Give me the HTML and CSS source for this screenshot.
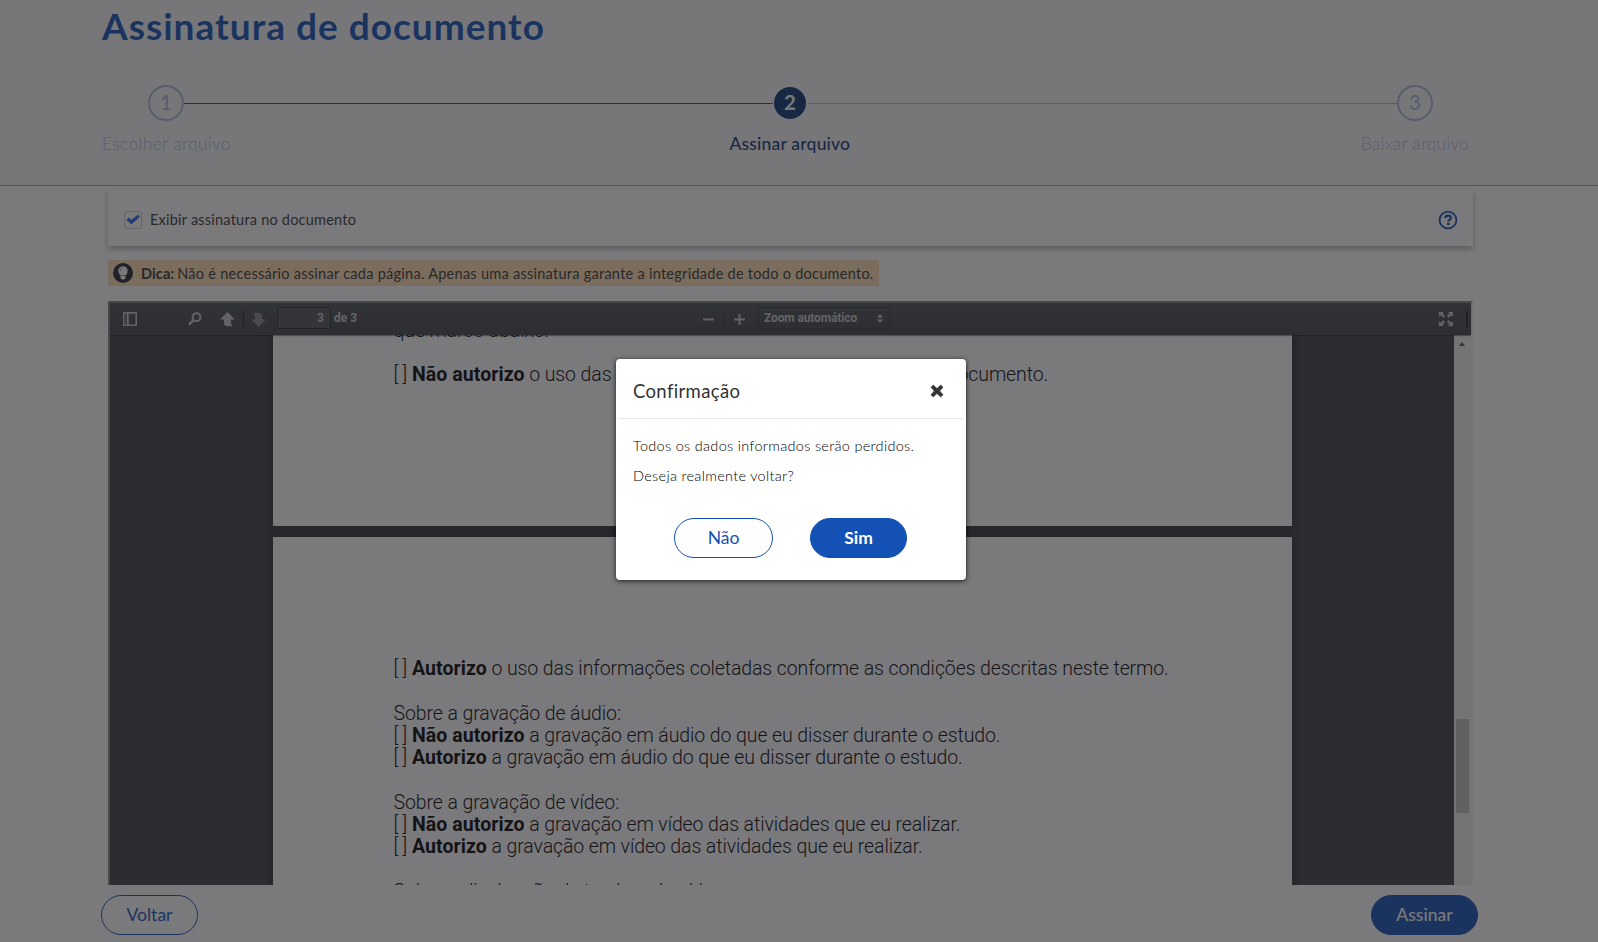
FILE: index.html
```html
<!DOCTYPE html>
<html lang="pt-BR">
<head>
<meta charset="utf-8">
<title>Assinatura de documento</title>
<link rel="stylesheet" href="styles.css">
</head>
<body>
<header class="header">
  <h1 class="title">Assinatura de documento</h1>
  <div class="track">
    <span class="circle">1</span><span class="line line-done"></span>
    <span class="circle circle-active">2</span><span class="line"></span>
    <span class="circle">3</span>
  </div>
  <div class="labels">
    <span class="label label-first">Escolher arquivo</span>
    <span class="label label-active">Assinar arquivo</span>
    <span class="label label-last">Baixar arquivo</span>
  </div>
</header>

<main class="main">
  <section class="card">
    <span class="checkbox"><svg width="14" height="11" viewBox="0 0 14 11"><path d="M.5 5.800 2.700 3.600l2.500 2.200L12.200.5 13.700 3 5.300 10.400z" fill="#2468dc"/></svg></span>
    <span class="card-text">Exibir assinatura no documento</span>
    <svg class="help" width="20" height="20" viewBox="0 0 20 20" fill="none" stroke="#1351b4"><circle cx="10" cy="10" r="8.400" stroke-width="1.800"/><path d="M7.200 8C7.400 6.400 8.600 5.600 10.100 5.600c1.600 0 2.800.900 2.800 2.200 0 1.900-2.500 1.800-2.500 3.600" stroke-width="2.400"/><path d="M9 12.700h2.700v2.400H9z" fill="#1351b4" stroke="none"/></svg>
  </section>

  <p class="tip">
    <svg class="bulb" width="20" height="20" viewBox="0 0 20 20"><circle cx="10" cy="10" r="10" fill="#212328"/><path d="M10 3.200a4.700 4.700 0 0 0-4.700 4.700c0 2 1.400 2.900 2 4.600h5.400c.6-1.700 2-2.600 2-4.600A4.700 4.700 0 0 0 10 3.200zM7.500 13.100h5v1.800l-1.300 1.700H8.800l-1.300-1.700z" fill="#fff"/><path d="M7.300 7.900A2.700 2.700 0 0 1 10 5.200" fill="none" stroke="#777" stroke-width=".7"/></svg>
    <strong class="tip-strong">Dica:</strong><span class="tip-text">Não é necessário assinar cada página. Apenas uma assinatura garante a integridade de todo o documento.</span>
  </p>

  <section class="viewer">
    <div class="toolbar">
      <svg class="ic-side" width="14" height="14" viewBox="0 0 14 14"><path d="M0 0h14v14H0zM1.500 1.700v10.800H4V1.700zM5.700 1.700v10.800h6.800V1.700z" fill="#c6c6c6" fill-rule="evenodd"/><path d="M1.500 1.700H4v10.800H1.500z" fill="#707070"/></svg>
      <svg class="ic-find" width="14" height="14" viewBox="0 0 14 14" fill="none" stroke="#c6c6c6"><circle cx="8.500" cy="5.200" r="3.900" stroke-width="2"/><path d="M5.500 8.200.8 12.900" stroke-width="2.400"/></svg>
      <svg class="ic-up" width="15" height="15" viewBox="0 0 15 15"><path d="M7.500 0 15 7.500h-4v3.300c0 1.600.8 2.600 2 3.400H7.500C5 14.200 4 12.600 4 10.500v-3H0z" fill="#c6c6c6"/></svg>
      <span class="split"></span>
      <svg class="ic-down" width="15" height="15" viewBox="0 0 15 15"><path d="M7.500 15 0 7.500h4V4.200C4 2.600 3.200 1.600 2 .8h5.500C10 .8 11 2.400 11 4.500v3h4z" fill="#8a8b8d"/></svg>
      <span class="page-input">3</span>
      <span class="page-total">de 3</span>
      <svg class="ic-minus" width="11" height="11" viewBox="0 0 11 11"><path d="M0 4.500h11v2H0z" fill="#c6c6c6"/></svg>
      <span class="split split-zoom"></span>
      <svg class="ic-plus" width="11" height="11" viewBox="0 0 11 11"><path d="M0 4.500h11v2H0zM4.500 0h2v11h-2z" fill="#c6c6c6"/></svg>
      <span class="zoom-select"><span>Zoom automático</span><svg width="6" height="9" viewBox="0 0 6 9"><path d="M3 0l3 3.500H0zM0 5.500h6L3 9z" fill="#c6c6c6"/></svg></span>
      <svg class="ic-full" width="14" height="14" viewBox="0 0 14 14" fill="#c6c6c6"><path d="M0 0h5L3.600 1.500 6 4 4.300 5.800 1.700 3.300 0 5zM14 0v5l-1.700-1.700-2.600 2.500L8 4l2.400-2.500L9 0zM0 14V9l1.700 1.700 2.600-2.500L6 10l-2.400 2.500L5 14zM14 14H9l1.400-1.500L8 10l1.700-1.800 2.600 2.500L14 9z"/></svg>
      <span class="split split-end"></span>
    </div>
    <div class="pages">
      <div class="sheets">
        <article class="page page-one">
          <p>que marco abaixo:</p>
          <p>&nbsp;</p>
          <p><span class="box">[ ]</span><b>Não autorizo</b> o uso das informações<span class="wide"> coletadas por meio deste </span>documento.</p>
        </article>
        <article class="page page-two">
          <p><span class="box">[ ]</span><b>Autorizo</b> o uso das informações coletadas conforme as condições descritas neste termo.</p>
          <p>&nbsp;</p>
          <p>Sobre a gravação de áudio:</p>
          <p><span class="box">[ ]</span><b>Não autorizo</b> a gravação em áudio do que eu disser durante o estudo.</p>
          <p><span class="box">[ ]</span><b>Autorizo</b> a gravação em áudio do que eu disser durante o estudo.</p>
          <p>&nbsp;</p>
          <p>Sobre a gravação de vídeo:</p>
          <p><span class="box">[ ]</span><b>Não autorizo</b> a gravação em vídeo das atividades que eu realizar.</p>
          <p><span class="box">[ ]</span><b>Autorizo</b> a gravação em vídeo das atividades que eu realizar.</p>
          <p>&nbsp;</p>
          <p>Sobre a divulgação de trechos do vídeo:</p>
        </article>
      </div>
      <div class="scrollbar"><span class="arrow"></span><span class="thumb"></span></div>
    </div>
  </section>
</main>

<footer class="footer">
  <button class="btn btn-back">Voltar</button>
  <button class="btn btn-primary btn-sign">Assinar</button>
</footer>

<div class="overlay"></div>
<div class="modal" role="dialog">
  <div class="modal-head">
    <h2 class="modal-title">Confirmação</h2>
    <svg width="14" height="14" viewBox="0 0 14 14"><path d="M3.300 1.200 7 4.700l3.700-3.500 2.200 2.100L9.500 7l3.400 3.700-2.200 2.100L7 9.300l-3.700 3.500-2.200-2.100L4.500 7 1.100 3.300z" fill="#333" stroke="#333" stroke-linejoin="round"/></svg>
  </div>
  <div class="modal-body">
    <p>Todos os dados informados serão perdidos.</p>
    <p>Deseja realmente voltar?</p>
  </div>
  <div class="modal-actions">
    <button class="btn btn-no">Não</button>
    <button class="btn btn-primary btn-yes">Sim</button>
  </div>
</div>
</body>
</html>
```
FILE: styles.css
```css
* { box-sizing: border-box; }
html, body { height: 942px; overflow: hidden; }
body { margin: 0; background: #fff; font-family: Lato, "Open Sans", sans-serif; color: #333; }
p, h1, h2 { margin: 0; }
svg { flex: none; display: block; }

.header { height: 186px; background: #f8f8f8; border-bottom: 1px solid #a0a0a4; padding: 0 129px 0 102px; }
.title { height: 85px; padding-top: 4px; font-size: 37px; line-height: 44px; font-weight: 700; letter-spacing: 1px; color: #1351b4; white-space: nowrap; }
.track { display: flex; align-items: center; height: 36px; padding: 0 36px 0 46px; }
.circle { flex: none; width: 36px; height: 36px; border: 2px solid #a9bad8; border-radius: 50%; color: #a9bad8; font-size: 20.5px; line-height: 31px; text-align: center; font-weight: 500; }
.circle-active { width: 32px; height: 32px; margin: 0 2px 0 1px; border: 0; background: #0c326f; color: #f8f8f8; font-weight: 700; }
.line { flex: 1; height: 1px; background: #a9bad8; }
.line-done { background: #1351b4; }
.labels { display: flex; justify-content: space-between; padding-top: 11px; font-size: 17.5px; line-height: 24px; white-space: nowrap; }
.label { color: #a9bad8; font-weight: 300; letter-spacing: .3px; }
.label-active { color: #0c326f; font-weight: 500; letter-spacing: .2px; margin-left: -12px; }
.label-last { letter-spacing: .15px; }

.main { height: 699px; padding: 4px 125px 0 108px; background: #fff; overflow: hidden; }
.card { display: flex; align-items: center; height: 56px; padding: 3px 15px 0 16px; background: #fff; box-shadow: 0 3px 6px rgba(0, 0, 0, .3); }
.checkbox { display: flex; align-items: center; justify-content: center; width: 18px; height: 18px; border: 1px solid #ccc; border-radius: 3px; }
.card-text { margin-left: 8px; font-size: 14.5px; letter-spacing: .22px; }
.help { margin-left: auto; }
.tip { display: flex; align-items: center; width: 771px; height: 26px; margin-top: 14px; padding: 0 0 0 5px; background: #ffdfb0; font-size: 14.5px; white-space: nowrap; }
.tip-strong { margin-left: 8px; letter-spacing: .1px; }
.tip-text { margin-left: 3px; letter-spacing: .27px; }

.viewer { display: flex; flex-direction: column; height: 584px; margin-top: 15px; border: 2px solid #eee; border-color: #858585 #f2f2f2 #f2f2f2 #858585; border-bottom: 0; }
.toolbar { display: flex; align-items: center; height: 32px; background: linear-gradient(#4b4d50, #404246); box-shadow: 0 1px 1px rgba(0, 0, 0, .4); font-family: Roboto, "Liberation Sans", sans-serif; font-size: 12px; font-weight: 700; color: #c6c6c6; position: relative; z-index: 1; }
.ic-side { margin-left: 13px; }
.ic-find { margin-left: 51px; }
.ic-up { margin-left: 18px; }
.split { width: 1px; height: 16px; margin-left: 8px; background: #222; }
.ic-down { margin-left: 7px; }
.page-input { width: 54px; height: 22px; margin: -2px 0 0 11px; padding-right: 6px; border: 1px solid #2c2c2c; border-radius: 2px; background: #505255; line-height: 20px; text-align: right; }
.page-total { margin: -2px 0 0 3px; width: 24px; white-space: nowrap; }
.ic-minus { margin-left: 345px; }
.split-zoom { margin-left: 9px; background: #3a3a3a; }
.ic-plus { margin-left: 10px; }
.zoom-select { display: flex; align-items: center; justify-content: space-between; width: 132px; height: 22px; margin: -2px 0 0 13px; padding: 0 6px 0 5px; border: 1px solid #38393b; border-radius: 2px; letter-spacing: -.13px; }
.ic-full { margin-left: auto; }
.split-end { width: 2px; margin: 0 3px 0 13px; }

.pages { display: flex; flex: 1; min-height: 0; background: #3d3f43; }
.sheets { flex: 1; overflow: hidden; padding-left: 163px; }
.page { width: 1019px; padding-left: 120.5px; background: #fff; box-shadow: 0 0 9px 2px rgba(0, 0, 0, .4); font-family: Roboto, "Open Sans", sans-serif; font-size: 19.5px; font-weight: 300; line-height: 22.25px; letter-spacing: -.1px; color: #000; white-space: nowrap; overflow: hidden; }
.page b { font-weight: 700; letter-spacing: .06px; }
.page-one { height: 191px; }
.page-one p:first-child { margin-top: -15.5px; }
.page-two { height: 520px; margin-top: 11px; padding-top: 121.2px; }
.box { display: inline-block; width: 18.5px; letter-spacing: -.2px; }
.wide { letter-spacing: -.05px; }
.scrollbar { display: flex; flex-direction: column; width: 17px; padding: 7px 0 0 2px; background: #f1f1f1; }
.arrow { margin-left: 3px; width: 0; height: 4px; border: solid transparent; border-width: 0 3.5px 4px; border-bottom-color: #505050; }
.thumb { width: 13px; height: 94px; margin-top: 373px; background: #c1c1c1; }

.footer { display: flex; justify-content: space-between; height: 57px; padding: 10px 120px 0 101px; background: #fff; }
.btn { height: 40px; padding: 0; border: 1px solid #1351b4; border-radius: 20px; background: #fff; color: #1351b4; font: 500 17.5px/38px Lato, "Open Sans", sans-serif; }
.btn-primary { background: #1351b4; color: #fff; }
.btn-back { width: 97px; font-weight: 400; }
.btn-sign { width: 107px; }

.overlay { position: absolute; inset: 0; z-index: 2; background: rgba(33, 34, 38, .6); }
.modal { position: absolute; left: 616px; top: 359px; z-index: 3; width: 350px; height: 221px; border-radius: 4px; background: #fff; box-shadow: 0 1px 5px rgba(0, 0, 0, .8); }
.modal-head { display: flex; align-items: center; justify-content: space-between; height: 60px; margin: 0 3px 0 2px; padding: 4px 19px 0 15px; border-bottom: 1px solid #e8e8e8; }
.modal-title { font-size: 18.5px; font-weight: 400; letter-spacing: .35px; }
.modal-body { padding: 12px 17px 0; font-size: 14.5px; font-weight: 300; line-height: 30px; letter-spacing: .3px; color: #000; white-space: nowrap; }
.modal-actions { display: flex; gap: 37px; padding: 27px 0 0 58px; }
.btn-no { width: 99px; font-weight: 400; }
.btn-yes { width: 97px; font-weight: 700; }
```
